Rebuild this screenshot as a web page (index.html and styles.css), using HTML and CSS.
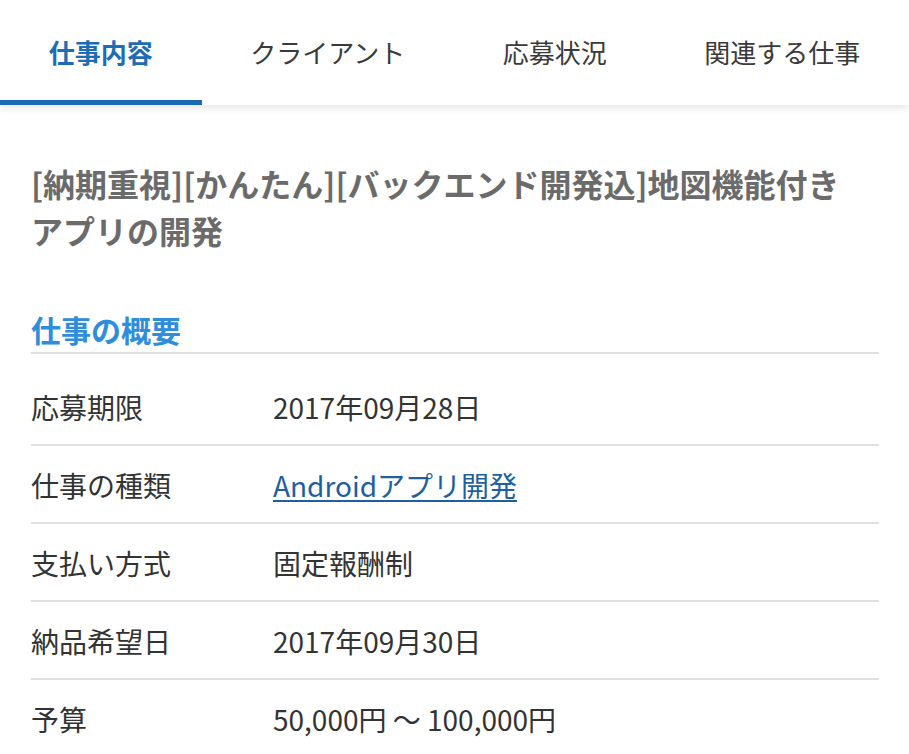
FILE: index.html
```html
<!DOCTYPE html>
<html lang="ja">
<head>
    <meta charset="UTF-8">
    <meta name="viewport" content="width=device-width, initial-scale=1.0">
    <title>仕事内容</title>
    <link rel="stylesheet" href="styles.css">
</head>
<body>
    <nav class="tabs">
        <a class="tab active" href="#">仕事内容</a>
        <a class="tab" href="#">クライアント</a>
        <a class="tab" href="#">応募状況</a>
        <a class="tab" href="#">関連する仕事</a>
    </nav>

    <main class="content">
        <h1 class="job-title">[納期重視][かんたん][バックエンド開発込]地図機能付きアプリの開発</h1>

        <h2 class="section-title">仕事の概要</h2>
        <dl class="summary">
            <div class="row">
                <dt>応募期限</dt>
                <dd>2017年09月28日</dd>
            </div>
            <div class="row">
                <dt>仕事の種類</dt>
                <dd><a href="#">Androidアプリ開発</a></dd>
            </div>
            <div class="row">
                <dt>支払い方式</dt>
                <dd>固定報酬制</dd>
            </div>
            <div class="row">
                <dt>納品希望日</dt>
                <dd>2017年09月30日</dd>
            </div>
            <div class="row">
                <dt>予算</dt>
                <dd>50,000円 〜 100,000円</dd>
            </div>
        </dl>
    </main>
</body>
</html>
```

FILE: styles.css
```css
body {
    margin: 0;
    background-color: #fff;
    font-family: "Noto Sans CJK JP", "Noto Sans", sans-serif;
    color: #333;
    overflow: hidden;
}
.tabs {
    display: flex;
    height: 105px;
    background-color: #fff;
    box-shadow: 0 3px 8px rgba(0, 0, 0, 0.10);
    position: relative;
}
.tab {
    flex: 1 1 auto;
    text-align: center;
    font-size: 26px;
    line-height: 96px;
    padding-top: 4px;
    color: #3a3a3a;
    text-decoration: none;
    border-bottom: 5px solid transparent;
    white-space: nowrap;
}
.tab.active {
    color: #1d6db5;
    font-weight: bold;
    border-bottom-color: #1a6bb4;
}
.content {
    padding: 0 30px 0 31px;
}
.job-title {
    margin: 55px 0 0;
    padding-right: 30px;
    font-size: 32px;
    line-height: 47px;
    font-weight: bold;
    color: #6b6b6b;
}
.section-title {
    margin: 55px 0 0;
    padding-bottom: 3px;
    font-size: 30px;
    line-height: 40px;
    font-weight: bold;
    color: #2e8edb;
    border-bottom: 2px solid #e0e0e0;
}
.summary {
    margin: 0;
    padding-top: 14px;
}
.row {
    display: grid;
    grid-template-columns: 242px 1fr;
    padding: 20px 0 18px;
    border-bottom: 2px solid #e0e0e0;
    font-size: 28px;
    line-height: 38px;
}
.row dt,
.row dd {
    margin: 0;
}
.row a {
    color: #1e5f9e;
    text-decoration: underline;
    text-decoration-thickness: 2px;
    text-underline-offset: 3px;
}
```
